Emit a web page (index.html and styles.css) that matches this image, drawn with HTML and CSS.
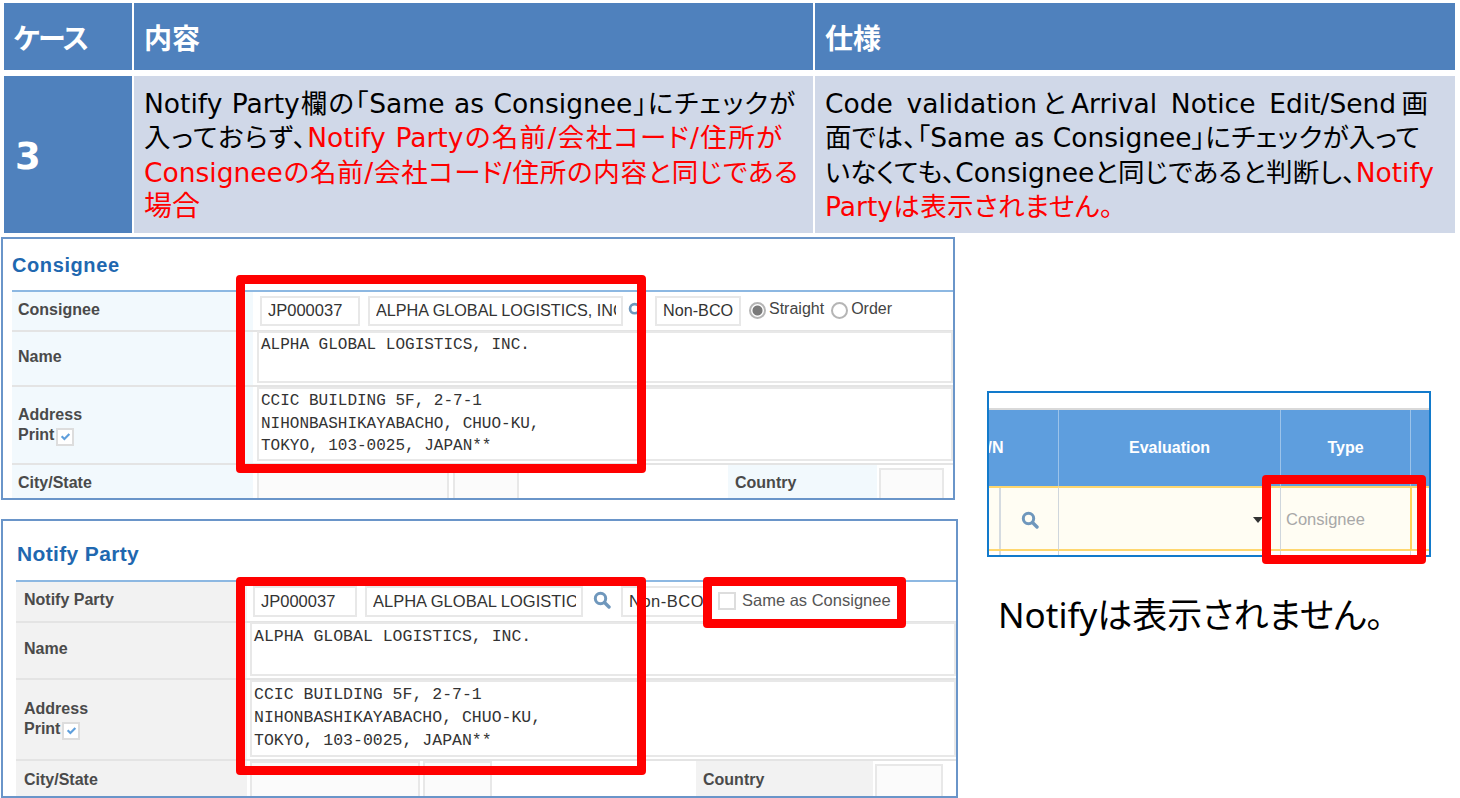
FILE: index.html
```html
<!DOCTYPE html>
<html lang="ja">
<head>
<meta charset="utf-8">
<title>Case 3</title>
<link rel="stylesheet" href="styles.css">
</head>
<body>
<div class="slide">
  <div class="spec">
    <div class="cell head head-case">ケース</div>
    <div class="cell head">内容</div>
    <div class="cell head head-spec">仕様</div>
    <div class="cell num">3</div>
    <div class="cell body">
      <span class="line l1">Notify Party欄の「Same as Consignee」にチェックが</span>
      <span class="line l2">入っておらず、<span class="red">Notify Partyの名前/会社コード/住所が</span></span>
      <span class="line l3 red">Consigneeの名前/会社コード/住所の内容と同じである</span>
      <span class="line l4 red">場合</span>
    </div>
    <div class="cell body">
      <span class="line s1">Code validationとArrival Notice Edit/Send画</span>
      <span class="line s2">面では、「Same as Consignee」にチェックが入って</span>
      <span class="line s3">いなくても、Consigneeと同じであると判断し、<span class="red">Notify</span></span>
      <span class="line s4 red">Partyは表示されません。</span>
    </div>
  </div>

  <div class="lower">
    <div class="forms">
      <section class="panel consignee">
        <h2 class="title">Consignee</h2>
        <div class="row r1">
          <div class="label">Consignee</div>
          <div class="content">
            <div class="field code"><span class="val">JP000037</span></div>
            <div class="field company"><span class="val">ALPHA GLOBAL LOGISTICS, INC.</span></div>
            <svg class="search" viewBox="0 0 18 18"><circle cx="7.5" cy="7.5" r="5.2" fill="none" stroke="#6f97bc" stroke-width="3"/><path d="M11.5 11.5 16 16" stroke="#6f97bc" stroke-width="3.4" stroke-linecap="round"/></svg>
            <div class="field bco"><span class="val">Non-BCO</span></div>
            <span class="radio on"></span><span class="opt">Straight</span>
            <span class="radio"></span><span class="opt">Order</span>
          </div>
        </div>
        <div class="row r2">
          <div class="label">Name</div>
          <div class="area">ALPHA GLOBAL LOGISTICS, INC.</div>
        </div>
        <div class="row r3">
          <div class="label">Address<br>Print<span class="check"><svg viewBox="0 0 10 8"><path d="M1.5 3.8 4 6.2 8.5 1.8" fill="none" stroke="#5f9fdc" stroke-width="2"/></svg></span></div>
          <div class="area">CCIC BUILDING 5F, 2-7-1<br>NIHONBASHIKAYABACHO, CHUO-KU,<br>TOKYO, 103-0025, JAPAN**</div>
        </div>
        <div class="row r4">
          <div class="label">City/State</div>
          <div class="content bottom">
            <div class="field city"></div>
            <div class="field state"></div>
            <div class="label country">Country</div>
            <div class="field ctry"></div>
          </div>
        </div>
      </section>

      <section class="panel notify">
        <h2 class="title">Notify Party</h2>
        <div class="row r1">
          <div class="label">Notify Party</div>
          <div class="content">
            <div class="field code"><span class="val">JP000037</span></div>
            <div class="field company"><span class="val">ALPHA GLOBAL LOGISTICS, INC.</span></div>
            <svg class="search" viewBox="0 0 18 18"><circle cx="7.5" cy="7.5" r="5.2" fill="none" stroke="#6f97bc" stroke-width="3"/><path d="M11.5 11.5 16 16" stroke="#6f97bc" stroke-width="3.4" stroke-linecap="round"/></svg>
            <div class="field bco"><span class="val">Non-BCO</span></div>
            <span class="check empty"></span><span class="opt same">Same as Consignee</span>
          </div>
        </div>
        <div class="row r2">
          <div class="label">Name</div>
          <div class="area">ALPHA GLOBAL LOGISTICS, INC.</div>
        </div>
        <div class="row r3">
          <div class="label">Address<br>Print<span class="check"><svg viewBox="0 0 10 8"><path d="M1.5 3.8 4 6.2 8.5 1.8" fill="none" stroke="#5f9fdc" stroke-width="2"/></svg></span></div>
          <div class="area">CCIC BUILDING 5F, 2-7-1<br>NIHONBASHIKAYABACHO, CHUO-KU,<br>TOKYO, 103-0025, JAPAN**</div>
        </div>
        <div class="row r4">
          <div class="label">City/State</div>
          <div class="content bottom">
            <div class="field city"></div>
            <div class="field state"></div>
            <div class="label country">Country</div>
            <div class="field ctry"></div>
          </div>
        </div>
      </section>
    </div>

    <div class="side">
      <div class="result">
        <div class="res-top"></div>
        <div class="res-grid">
          <div class="rh rh-bn"><span>B/N</span></div>
          <div class="rh">Evaluation</div>
          <div class="rh">Type</div>
          <div class="rh"></div>
          <div class="rc rc-first">
            <span class="rc-stub"></span>
            <span class="rc-icon"><svg class="search big" viewBox="0 0 18 18"><circle cx="7.5" cy="7.5" r="5.2" fill="none" stroke="#6f97bc" stroke-width="3"/><path d="M11.5 11.5 16 16" stroke="#6f97bc" stroke-width="3.4" stroke-linecap="round"/></svg></span>
          </div>
          <div class="rc rc-eval"><span class="caret"></span></div>
          <div class="rc rc-type">Consignee</div>
          <div class="rc rc-last"></div>
          <div class="rf rf-first"><span class="rc-stub"></span></div>
          <div class="rf"></div>
          <div class="rf"></div>
          <div class="rf"></div>
        </div>
      </div>
      <p class="note">Notifyは表示されません。</p>
    </div>
  </div>

  <div class="mark mark-a"></div>
  <div class="mark mark-b"></div>
  <div class="mark mark-c"></div>
  <div class="mark mark-d"></div>
</div>
</body>
</html>
```
FILE: styles.css
```css
* { box-sizing: border-box; }
html, body { margin: 0; padding: 0; background: #fff; }
.slide {
  position: relative;
  width: 1460px;
  height: 798px;
  overflow: hidden;
  font-family: "Liberation Sans", Arial, sans-serif;
}

/* spec table */
.spec {
  display: grid;
  grid-template-columns: 128px 679px 640px;
  grid-template-rows: 67px 157px;
  column-gap: 2px;
  row-gap: 6px;
  margin: 3px 0 0 4px;
}
.cell { display: flex; align-items: center; white-space: nowrap; }
.head {
  background: #4f81bd;
  color: #fff;
  font-family: "Noto Sans CJK JP", sans-serif;
  font-weight: 700;
  font-size: 28px;
  padding-left: 10px;
}
.head-case { letter-spacing: -3px; padding-left: 9px; }
.num {
  background: #4f81bd;
  color: #fff;
  font-family: "DejaVu Sans", sans-serif;
  font-weight: 700;
  font-size: 37px;
  padding: 3px 0 0 11px;
}
.body {
  display: block;
  background: #d0d8e8;
  color: #000;
  font-family: "DejaVu Sans", "Noto Sans CJK JP", sans-serif;
  font-size: 26.5px;
  line-height: 34.5px;
  padding: 10.5px 0 0 10px;
  font-feature-settings: "palt";
  white-space: normal;
}
.line { display: block; text-align-last: justify; text-align: justify; }
.l1 { width: 651px; }
.l2 { width: 638px; }
.l3 { width: 654px; }
.l4 { width: 70px; text-align-last: left; font-size: 28px; }
.s1 { width: 603px; }
.s2 { width: 595px; }
.s3 { width: 609px; }
.s4 { width: 288px; }
.red { color: #f00; }

/* lower area */
.lower { display: flex; margin: 4px 0 0 1px; align-items: flex-start; }
.forms { width: 957px; }
.panel { border: 2px solid #6a95c9; overflow: hidden; background: #fff; }
.consignee { width: 954px; height: 263px; padding-left: 9px; }
.notify { width: 957px; height: 279px; margin-top: 19px; padding-left: 13px; }
.title {
  margin: 0;
  display: flex;
  align-items: center;
  border-bottom: 2px solid #8db8e2;
  color: #1f68b0;
  font-weight: 700;
  letter-spacing: 0.6px;
}
.consignee .title { height: 53px; font-size: 20px; padding-top: 2px; }
.notify .title { height: 61px; font-size: 21px; padding: 6px 0 0 1px; letter-spacing: 0.35px; }

.row { display: flex; border-bottom: 2px solid #e4e4e4; }
.row.r4 { border-bottom: 0; }
.label {
  flex: none;
  display: block;
  align-self: stretch;
  color: #4a4a4a;
  font-size: 16px;
  font-weight: 700;
  line-height: 20px;
  padding-left: 6px;
}
.consignee .label { width: 241px; background: #f2f9fd; }
.notify .label { width: 231px; background: #f2f2f2; padding-left: 8px; }
.consignee .r1 { height: 40px; }
.consignee .r2 { height: 55px; }
.consignee .r3 { height: 78px; }
.consignee .r4 { height: 34px; }
.notify .r1 { height: 41px; }
.notify .r2 { height: 57px; }
.notify .r3 { height: 81px; }
.notify .r4 { height: 35px; }
.consignee .r1 > .label { padding-top: 8px; }
.consignee .r2 > .label { padding-top: 15px; }
.consignee .r3 > .label { padding-top: 18px; }
.consignee .r4 > .label { padding-top: 8px; }
.notify .r1 > .label { padding-top: 8px; }
.notify .r2 > .label { padding-top: 16px; }
.notify .r3 > .label { padding-top: 19px; }
.notify .r4 > .label { padding-top: 9px; }

.content { display: flex; align-items: flex-start; flex: 1; min-width: 0; }
.field {
  flex: none;
  border: 2px solid #e8e8e8;
  background: #fff;
  color: #333;
  font-size: 16.5px;
  white-space: nowrap;
  padding: 3px 5px 0 6px;
}
.val { display: block; overflow: hidden; }
.consignee .content { padding: 4px 0 0 7px; }
.consignee .field { height: 30px; }
.consignee .code { width: 100px; }
.consignee .company { width: 255px; margin-left: 8px; font-size: 16.2px; }
.consignee .bco { width: 86px; margin-left: 11px; font-size: 16.2px; }
.notify .content { padding: 4px 0 0 6px; }
.notify .field { height: 31px; padding-top: 4px; }
.notify .code { width: 104px; }
.notify .company { width: 218px; margin-left: 8px; }
.notify .bco { width: 84px; margin-left: 10px; padding-right: 0; letter-spacing: 0.5px; }
.search { flex: none; width: 18px; height: 18px; }
.consignee .content > .search { margin: 6px 0 0 5px; width: 16px; height: 16px; }
.notify .content > .search { margin: 5px 0 0 10px; }
.radio {
  flex: none;
  width: 17px;
  height: 17px;
  border-radius: 50%;
  border: 2px solid #b5b5b5;
  background: #fff;
  margin: 6px 3px 0 8px;
}
.radio.on { background: radial-gradient(circle, #7a7a7a 0 4.5px, #fff 5.5px); }
.radio + .opt + .radio { margin-left: 7px; }
.opt { color: #444; font-size: 16px; line-height: 20px; margin-top: 3px; }
.opt.same { color: #555; font-size: 16.5px; margin: 4px 0 0 6px; }
.check {
  display: inline-flex;
  align-items: center;
  justify-content: center;
  width: 18px;
  height: 18px;
  border: 2px solid #ddd;
  background: #fff;
  margin-left: 2px;
  vertical-align: -1px;
}
.check svg { width: 11px; height: 9px; }
.check.empty { flex: none; margin: 6px 0 0 13px; }

.area {
  flex: 1;
  min-width: 0;
  border: 2px solid #e8e8e8;
  background: #fff;
  color: #333;
  font-family: "Liberation Mono", "Courier New", monospace;
  white-space: nowrap;
  align-self: flex-start;
}
.consignee .area { margin-left: 4px; font-size: 16px; line-height: 22.5px; padding: 1px 0 0 2px; }
.consignee .r2 .area { height: 52px; margin-top: -1px; }
.consignee .r3 .area { height: 74px; }
.notify .area { margin-left: 3px; font-size: 16.5px; line-height: 23px; padding: 1px 0 0 2px; }
.notify .r2 .area { height: 54px; margin-top: -1px; }
.notify .r3 .area { height: 77px; }

.consignee .bottom { padding: 0 0 0 4px; }
.notify .bottom { padding: 0 0 0 3px; }
.consignee .bottom .field, .notify .bottom .field { height: 40px; background: #fbfbfb; }
.consignee .city { width: 192px; }
.consignee .state { width: 66px; margin-left: 4px; }
.consignee .label.country { width: 149px; margin-left: 209px; height: 34px; padding-left: 7px; padding-top: 8px; }
.consignee .bottom .ctry { width: 65px; margin: 3px 0 0 2px; }
.notify .city { width: 170px; }
.notify .state { width: 69px; margin-left: 3px; }
.notify .label.country { width: 177px; margin-left: 204px; height: 35px; padding-left: 7px; padding-top: 9px; }
.notify .bottom .ctry { width: 68px; margin: 3px 0 0 2px; }

/* right side */
.side { margin: 154px 0 0 29px; width: 460px; }
.result { width: 444px; height: 166px; border: 2px solid #127acb; background: #fff; overflow: hidden; }
.res-top { height: 17px; border-bottom: 2px solid #d9d9d9; }
.res-grid { display: grid; grid-template-columns: 69px 222px 130px 19px; grid-template-rows: 76px 65px 4px; }
.rh {
  display: flex;
  align-items: center;
  justify-content: center;
  background: #5e9ede;
  color: #fff;
  font-size: 16px;
  font-weight: 700;
  border-left: 1px solid #9cc3ea;
}
.rh-bn { justify-content: flex-start; border-left: 0; text-indent: -13px; overflow: hidden; }
.rc {
  display: flex;
  align-items: center;
  background: #fffdf3;
  border-top: 2px solid #ffd76e;
  border-bottom: 2px solid #ffd76e;
  border-left: 1px solid #cfd6dc;
  padding-top: 2px;
}
.rc-first { border-left: 0; align-items: stretch; padding-top: 0; }
.rc-stub { width: 12px; flex: none; border-right: 2px solid #d5dbe0; }
.rc-icon { flex: 1; display: flex; align-items: center; justify-content: center; padding-top: 2px; }
.rc-eval { justify-content: flex-end; padding-right: 17px; }
.caret { width: 0; height: 0; border: 5px solid transparent; border-top: 6px solid #333; border-bottom: 0; }
.rc-type { color: #a8a8a8; font-size: 16.5px; padding-left: 5px; }
.rc-last { border-left: 2px solid #ffd35c; }
.search.big { width: 18px; height: 18px; }
.rf { border-left: 1px solid #cfd6dc; }
.rf-first { border-left: 0; height: 4px; }
.rf-first .rc-stub { display: block; height: 4px; }
.note {
  margin: 34px 0 0 11px;
  color: #000;
  font-family: "Noto Sans", "Noto Sans CJK JP", sans-serif;
  font-size: 35px;
  line-height: 48px;
  white-space: nowrap;
  font-feature-settings: "palt";
}

/* highlight frames */
.mark { position: absolute; border: 9px solid #f00; border-radius: 4px; }
.mark-a { left: 236px; top: 275px; width: 410px; height: 198px; }
.mark-b { left: 236px; top: 577px; width: 410px; height: 198px; }
.mark-c { left: 703px; top: 577px; width: 203px; height: 51px; }
.mark-d { left: 1262px; top: 475px; width: 164px; height: 89px; }
```
